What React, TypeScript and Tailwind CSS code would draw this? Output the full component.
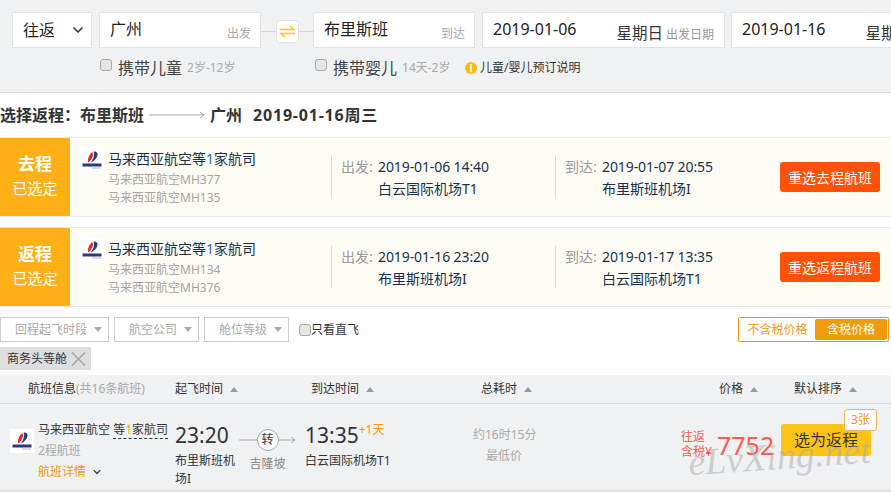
import { ChevronDown, X } from "lucide-react";

const font = { fontFamily: '"Noto Sans", "Noto Sans CJK SC", sans-serif' };

const selected = [
  {
    tag: "去程",
    flights: ["马来西亚航空MH377", "马来西亚航空MH135"],
    depart: "2019-01-06 14:40",
    departPort: "白云国际机场T1",
    arrive: "2019-01-07 20:55",
    arrivePort: "布里斯班机场I",
    action: "重选去程航班",
  },
  {
    tag: "返程",
    flights: ["马来西亚航空MH134", "马来西亚航空MH376"],
    depart: "2019-01-16 23:20",
    departPort: "布里斯班机场I",
    arrive: "2019-01-17 13:35",
    arrivePort: "白云国际机场T1",
    action: "重选返程航班",
  },
];

const Logo = () => (
  <svg width="24" height="24" viewBox="0 0 24 24" className="bg-white shrink-0">
    <path d="M12.5 4 C9.5 6 7.5 10 8 14.5 C10.5 13 12 10 13 7.5 Z" fill="#e3262e" />
    <path d="M13.5 3.5 C16 3 18 4.5 17.5 7 C17 10 14.5 13 11 14.5 C13 11.5 15 7.5 13.5 3.5 Z" fill="#1f3f8f" />
    <rect x="2.5" y="15.5" width="19" height="3" fill="#2b3a78" />
    <rect x="12" y="19.5" width="9" height="1" fill="#b5b8c8" />
  </svg>
);

const Check = () => (
  <span className="w-3 h-3 -mt-[6px] rounded-[3px] border border-[#a9a9a9] bg-[#e6e6e6] shrink-0 block" />
);

const Sort = () => (
  <span className="ml-[7px] w-0 h-0 border-x-[4px] border-x-transparent border-b-[5px] border-b-[#999] inline-block" />
);

const Caret = () => (
  <span className="w-0 h-0 border-x-[4px] border-x-transparent border-t-[5px] border-t-[#aaa] inline-block" />
);

const Filter = ({ label, width }: { label: string; width: string }) => (
  <div className={`${width} h-[25px] border border-[#ccc] flex items-center justify-end gap-[7px] pr-[6px] text-[12px] text-[#aaa]`}>
    {label}
    <Caret />
  </div>
);

const Leg = ({ label, time, port, width }: { label: string; time: string; port: string; width: string }) => (
  <div className={`${width} flex items-center`}>
    <div className="h-[42px] border-l border-[#d9d9d9] pl-[9px] flex">
      <div className="w-[37px] text-[14px] leading-[22px] text-[#999]">{label}</div>
      <div className="text-[#17324d]">
        <div className="text-[14px] leading-[22px] tracking-[-0.1px]">{time}</div>
        <div className="text-[14px] leading-[22px]">{port}</div>
      </div>
    </div>
  </div>
);

const SelectedCard = ({ item }: { item: (typeof selected)[number] }) => (
  <div className="h-[80px] flex bg-[#fffcf6] border-y border-[#e6e8ee]">
    <div className="w-[70px] bg-[#ffb016] text-white flex flex-col items-center justify-center">
      <div className="text-[17px] leading-[24px] font-bold -mt-[2px]">{item.tag}</div>
      <div className="text-[15px] leading-[24px]">已选定</div>
    </div>
    <div className="w-[261px] flex pl-[10px] pt-[10px]">
      <Logo />
      <div className="ml-[4px]">
        <div className="text-[14px] leading-[22px] text-[#17324d] mb-[1px]">
          马来西亚航空等<span className="text-[#1b6fb5]">1</span>家航司
        </div>
        {item.flights.map((f) => (
          <div key={f} className="text-[12px] leading-[18px] text-[#a5a5a5]">
            {f}
          </div>
        ))}
      </div>
    </div>
    <Leg label="出发:" time={item.depart} port={item.departPort} width="w-[224px]" />
    <Leg label="到达:" time={item.arrive} port={item.arrivePort} width="w-[225px]" />
    <div className="flex items-center">
      <button className="w-[100px] h-[30px] rounded-[3px] bg-[#ff5207] text-white text-[14px]">{item.action}</button>
    </div>
  </div>
);

export default function App() {
  return (
    <div style={font} className="relative w-[891px] h-[492px] overflow-hidden bg-white text-[#333]">
      {/* search bar */}
      <div className="h-[93px] bg-[#f0f1f3] border-b border-[#e0e0e0] pt-[12px]">
        <div className="flex pl-[12px] h-[36px] whitespace-nowrap">
          <div className="w-[80px] shrink-0 bg-white border border-[#e3e3e3] flex items-center justify-between pl-[10px] pr-[5px] text-[16px] text-[#222]">
            往返
            <ChevronDown size={16} strokeWidth={2.5} color="#33334a" />
          </div>
          <div className="ml-[7px] w-[162px] shrink-0 bg-white border border-[#e3e3e3] flex justify-between pl-[10px] pr-[9px]">
            <span className="text-[16px] leading-[33px] text-[#222]">广州</span>
            <span className="text-[12px] leading-[42px] text-[#aaa]">出发</span>
          </div>
          <div className="w-[52px] shrink-0 flex items-center justify-center relative pt-[3px]">
            <div className="absolute left-0 right-0 top-[19px] border-t border-[#d5d5d5]" />
            <div className="relative w-[23px] h-[23px] rounded-[5px] bg-white border border-[#e3e3e3] flex items-center justify-center">
              <svg width="15" height="13" viewBox="0 0 15 13" fill="none" stroke="#fdc42f" strokeWidth="1.6">
                <path d="M0 4.5 H14 L10 1" />
                <path d="M15 8.5 H1 L5 12" />
              </svg>
            </div>
          </div>
          <div className="w-[162px] shrink-0 bg-white border border-[#e3e3e3] flex justify-between pl-[10px] pr-[9px]">
            <span className="text-[16px] leading-[33px] text-[#222]">布里斯班</span>
            <span className="text-[12px] leading-[42px] text-[#aaa]">到达</span>
          </div>
          <div className="ml-[7px] w-[243px] shrink-0 bg-white border border-[#e3e3e3] flex justify-between pl-[10px] pr-[10px]">
            <span className="text-[16px] leading-[33px] text-[#222]">2019-01-06</span>
            <span className="leading-[40px]">
              <span className="text-[15.5px] text-[#333]">星期日</span>
              <span className="text-[12px] text-[#999] ml-[3px]">出发日期</span>
            </span>
          </div>
          <div className="ml-[6px] w-[243px] shrink-0 bg-white border border-[#e3e3e3] flex justify-between pl-[10px] pr-[10px]">
            <span className="text-[16px] leading-[33px] text-[#222]">2019-01-16</span>
            <span className="leading-[40px]">
              <span className="text-[15.5px] text-[#333]">星期日</span>
              <span className="text-[12px] text-[#999] ml-[3px]">到达日期</span>
            </span>
          </div>
        </div>
        <div className="flex items-center h-[20px] mt-[10px] whitespace-nowrap">
          <div className="ml-[100px] w-[215px] flex items-center">
            <Check />
            <span className="ml-[6px] text-[16px] text-[#444]">携带儿童</span>
            <span className="ml-[5px] text-[12px] text-[#aaa]">2岁-12岁</span>
          </div>
          <div className="w-[150px] flex items-center">
            <Check />
            <span className="ml-[6px] text-[16px] text-[#444]">携带婴儿</span>
            <span className="ml-[5px] text-[12px] text-[#aaa]">14天-2岁</span>
          </div>
          <span className="w-3 h-3 rounded-full bg-[#fdb913] text-white text-[10px] font-bold leading-[12px] text-center">i</span>
          <span className="ml-[3px] text-[12px] text-[#333]">儿童/婴儿预订说明</span>
        </div>
      </div>

      {/* route title */}
      <div className="h-[44px] flex items-center text-[16px] font-bold text-[#333] whitespace-nowrap">
        选择返程：布里斯班
        <svg width="56" height="8" viewBox="0 0 56 8" fill="none" stroke="#aaa" className="ml-[5px] mr-[5px]">
          <path d="M0 4 H55 M51 1 L55 4 L51 7" />
        </svg>
        广州
        <span className="ml-[11px] tracking-[0.8px]">2019-01-16周三</span>
      </div>

      {/* chosen flights */}
      <div className="flex flex-col gap-[10px]">
        {selected.map((item) => (
          <SelectedCard key={item.tag} item={item} />
        ))}
      </div>

      {/* filters */}
      <div className="flex items-center mt-[10px] h-[25px] whitespace-nowrap">
        <Filter label="回程起飞时段" width="w-[109px]" />
        <div className="w-[5px]" />
        <Filter label="航空公司" width="w-[85px]" />
        <div className="w-[5px]" />
        <Filter label="舱位等级" width="w-[85px]" />
        <div className="ml-[10px] w-3 h-3 rounded-[3px] border border-[#a9a9a9] bg-[#e6e6e6]" />
        <span className="text-[12px] text-[#333]">只看直飞</span>
        <div className="ml-auto mr-[2px] w-[151px] h-[25px] border border-[#f09a0e] rounded-[2px] flex text-[12px] p-px">
          <span className="w-[75px] text-center leading-[21px] text-[#f09a0e]">不含税价格</span>
          <span className="flex-1 text-center leading-[21px] text-white bg-[#f09a0e] rounded-[2px]">含税价格</span>
        </div>
      </div>
      <div className="mt-[5px] w-[91px] h-[23px] bg-[#dcdee0] flex items-center pl-[7px] text-[12px] text-[#333] whitespace-nowrap">
        商务头等舱
        <X size={28} strokeWidth={1.4} color="#a5a5a5" className="-ml-[1px] -my-[3px]" />
      </div>

      {/* result table header */}
      <div className="mt-[5px] h-[29px] bg-[#f0f1f3] border-b border-[#ddd] flex items-center text-[12px] text-[#333] whitespace-nowrap">
        <div className="w-[175px] pl-[28px]">
          航班信息<span className="text-[#aaa]">(共16条航班)</span>
        </div>
        <div className="w-[136px] flex items-center">起飞时间<Sort /></div>
        <div className="w-[170px] flex items-center">到达时间<Sort /></div>
        <div className="w-[238px] flex items-center">总耗时<Sort /></div>
        <div className="w-[75px] flex items-center">价格<Sort /></div>
        <div className="flex items-center">默认排序<Sort /></div>
      </div>

      {/* result row */}
      <div className="h-[88px] bg-[#f0f1f3] border-b-2 border-[#e0e0e0] flex whitespace-nowrap">
        <div className="w-[175px] pl-[10px] pt-[25px]">
          <Logo />
        </div>
      </div>
      <div className="absolute left-[38px] top-[419px] whitespace-nowrap">
        <div className="text-[12px] leading-[22px] text-[#333]">
          马来西亚航空 <span className="border-b border-dashed border-[#333]">等<span className="text-[#f09a0e]">1</span>家航司</span>
        </div>
        <div className="text-[12px] leading-[20px] text-[#aaa]">2程航班</div>
        <div className="text-[12px] leading-[22px] text-[#f09a0e] flex items-center gap-[5px]">
          航班详情
          <ChevronDown size={12} strokeWidth={2.5} color="#444" />
        </div>
      </div>
      <div className="absolute left-[175px] top-[421px] w-[65px]">
        <div className="text-[21px] leading-[28px] text-[#333]">23:20</div>
        <div className="text-[12px] leading-[18px] text-[#333] mt-[3px]">布里斯班机场I</div>
      </div>
      <div className="absolute left-[239px] top-[428px] w-[57px] flex flex-col items-center">
        <div className="relative w-full h-[24px] flex items-center justify-center">
          <svg width="57" height="8" viewBox="0 0 57 8" fill="none" stroke="#aaa" className="absolute left-0 top-[8px]">
            <path d="M0 4 H56 M52 1 L56 4 L52 7" />
          </svg>
          <div className="relative w-[22px] h-[22px] rounded-full bg-white border border-[#aaa] text-[12px] leading-[20px] text-center text-[#333]">转</div>
        </div>
        <div className="text-[12px] leading-[20px] text-[#888] mt-[2px]">吉隆坡</div>
      </div>
      <div className="absolute left-[305px] top-[421px] whitespace-nowrap">
        <div className="flex items-start">
          <span className="text-[21px] leading-[28px] text-[#333]">13:35</span>
          <span className="text-[12px] leading-[18px] text-[#f09a0e]">+1天</span>
        </div>
        <div className="text-[12px] leading-[18px] text-[#333] mt-[3px]">白云国际机场T1</div>
      </div>
      <div className="absolute left-[473px] top-[425px] w-[62px] text-center text-[12px] leading-[20px] text-[#aaa] whitespace-nowrap">
        <div>约16时15分</div>
        <div className="mt-[1px]">最低价</div>
      </div>
      <div className="absolute left-[681px] top-[429px] text-[12px] leading-[15px] text-[#ff5a4b] whitespace-nowrap">
        <div>往返</div>
        <div>含税¥</div>
      </div>
      <div className="absolute left-[717px] top-[429px] text-[25px] leading-[32px] text-[#ff5a4b]">7752</div>
      <button className="absolute left-[781px] top-[424px] w-[90px] h-[32px] rounded-[3px] bg-[#fdc415] text-[16px] text-[#333]">选为返程</button>
      <div className="absolute left-[844px] top-[409px] w-[33px] h-[22px] rounded-[3px] border border-[#f5b35a] bg-white text-[12px] leading-[20px] text-center text-[#f09a0e]">3张</div>

      {/* watermark */}
      <div
        className="absolute left-[688px] top-[431px] text-[38px] leading-[50px] italic text-[#aaa]/50 -rotate-[4deg] whitespace-nowrap pointer-events-none"
        style={{ fontFamily: '"Liberation Serif", serif' }}
      >
        eLvXing.net
      </div>
    </div>
  );
}
